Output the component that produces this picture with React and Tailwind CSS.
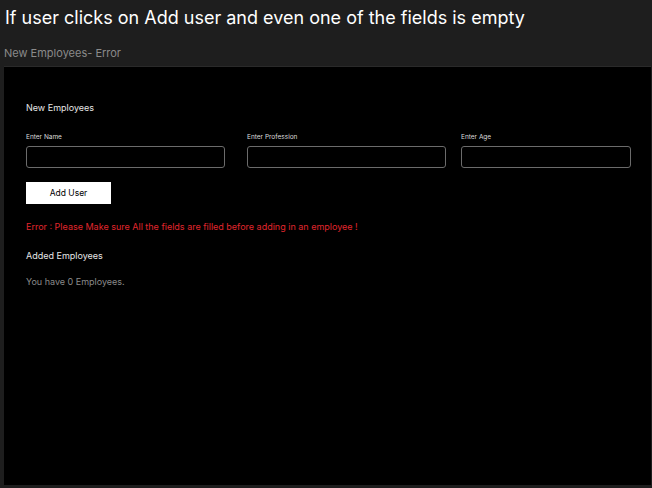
export default function App() {
  return (
    <div className="w-[652px] h-[488px] bg-[#1e1e1e] overflow-hidden" style={{ fontFamily: 'Inter, "Noto Sans", sans-serif' }}>
      <div className="pl-[5px] pt-[6px] h-[40px] text-[18px] leading-[24px] text-white">If user clicks on Add user and even one of the fields is empty</div>
      <div className="pl-[4px] h-[26px] text-[11px] leading-[26px] text-[#8a8a8a]">New Employees- Error</div>
      <div className="ml-[4px] mr-[1px] h-[419px] bg-black border-t border-[#2a2a2a] pl-[22px] pt-[34px]">
        <div className="text-[9px] leading-[14px] text-[#e6e6e6]">New Employees</div>
        <div className="flex mt-[18px]">
          <div className="w-[199px] mr-[22px]">
            <div className="text-[6.5px] leading-[8px] text-[#dcdcdc]">Enter Name</div>
            <div className="mt-[5px] h-[22px] border border-[#6b6b6b] rounded-[3px]"></div>
          </div>
          <div className="w-[199px] mr-[15px]">
            <div className="text-[6.5px] leading-[8px] text-[#dcdcdc]">Enter Profession</div>
            <div className="mt-[5px] h-[22px] border border-[#6b6b6b] rounded-[3px]"></div>
          </div>
          <div className="w-[170px]">
            <div className="text-[6.5px] leading-[8px] text-[#dcdcdc]">Enter Age</div>
            <div className="mt-[5px] h-[22px] border border-[#6b6b6b] rounded-[3px]"></div>
          </div>
        </div>
        <div className="mt-[14px] w-[85px] h-[22px] bg-white text-black text-[8.5px] flex items-center justify-center">Add User</div>
        <div className="mt-[17px] text-[9px] leading-[12px] text-[#e0262d]">Error : Please Make sure All the fields are filled before adding in an employee !</div>
        <div className="mt-[17px] text-[9px] leading-[12px] text-[#e6e6e6]">Added Employees</div>
        <div className="mt-[14px] text-[9px] leading-[12px] text-[#8a8a8a]">You have 0 Employees.</div>
      </div>
    </div>
  );
}
